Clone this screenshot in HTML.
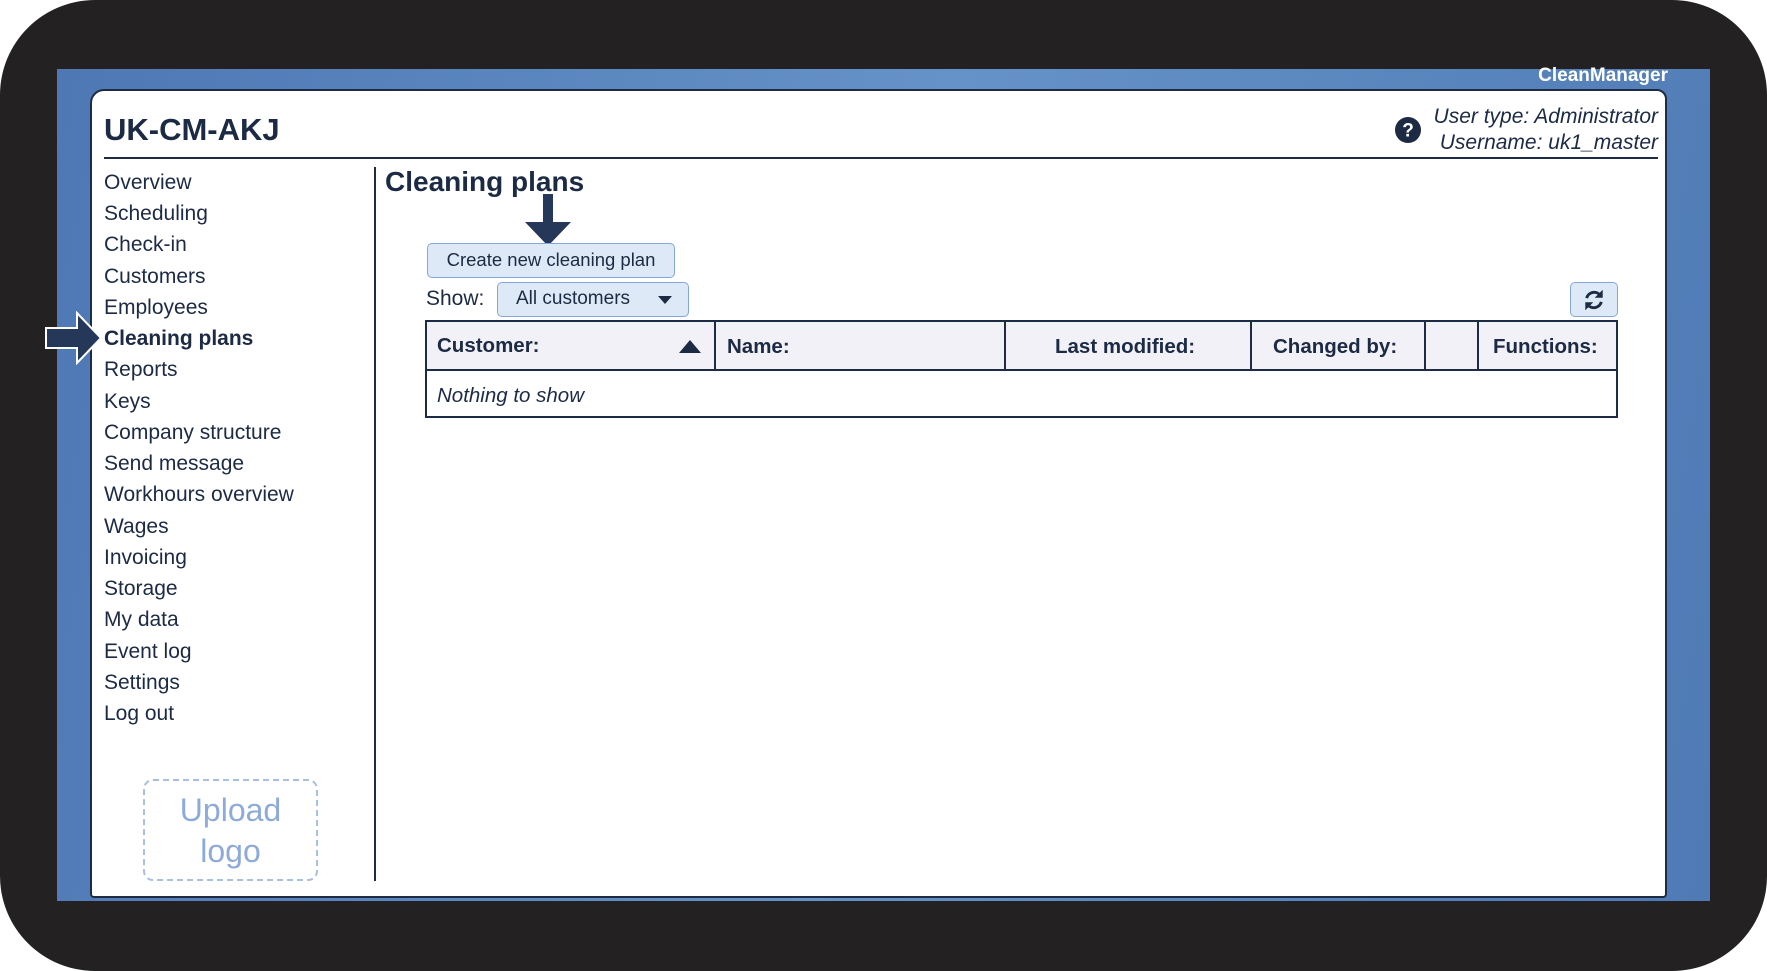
<!DOCTYPE html>
<html><head><meta charset="utf-8"><style>
*{margin:0;padding:0;box-sizing:border-box}
body{width:1767px;height:971px;background:#fff;font-family:"Liberation Sans",sans-serif;color:#1c2a44;position:relative;overflow:hidden}
.frame{position:absolute;left:0;top:0;width:1767px;height:971px;background:#232122;border-radius:95px}
.blue{position:absolute;left:57px;top:69px;width:1653px;height:832px;background:linear-gradient(100deg,#4e78b4 0%,#6592c8 50%,#4f7ab5 100%)}
.panel{position:absolute;left:90px;top:89px;width:1577px;height:809px;background:#fff;border:2px solid #1e2b45;border-radius:14px 10px 4px 4px}
.abs{position:absolute;white-space:nowrap}
.nav div{position:absolute;left:104px;font-size:21px;line-height:24px}
.btn{position:absolute;background:#dde9f7;border:1.5px solid #86a7d6;border-radius:5px}
</style></head><body>
<div class="frame"></div>
<div class="blue"></div>
<div class="abs" style="right:99px;top:65px;color:#fff;font-weight:bold;font-size:19px">CleanManager</div>
<div class="panel"></div>
<div class="abs" style="left:104px;top:112px;font-size:31px;font-weight:bold">UK-CM-AKJ</div>
<div class="abs" style="left:104px;top:157px;width:1554px;height:2px;background:#1e2b45"></div>
<div class="abs" style="right:109px;top:104px;font-size:21px;font-style:italic;text-align:right;line-height:26px">User type: Administrator<br>Username: uk1_master</div>
<svg class="abs" style="left:1395px;top:117px" width="26" height="26" viewBox="0 0 26 26"><circle cx="13" cy="13" r="13" fill="#1c2a44"/><text x="13" y="19.5" text-anchor="middle" font-family="Liberation Sans" font-weight="bold" font-size="19" fill="#fff">?</text></svg>
<div class="nav">
<div style="top:171px">Overview</div>
<div style="top:202px">Scheduling</div>
<div style="top:233px">Check-in</div>
<div style="top:265px">Customers</div>
<div style="top:296px">Employees</div>
<div style="top:327px;font-weight:bold">Cleaning plans</div>
<div style="top:358px">Reports</div>
<div style="top:390px">Keys</div>
<div style="top:421px">Company structure</div>
<div style="top:452px">Send message</div>
<div style="top:483px">Workhours overview</div>
<div style="top:515px">Wages</div>
<div style="top:546px">Invoicing</div>
<div style="top:577px">Storage</div>
<div style="top:608px">My data</div>
<div style="top:640px">Event log</div>
<div style="top:671px">Settings</div>
<div style="top:702px">Log out</div>
</div>
<svg class="abs" style="left:44px;top:311px" width="60" height="54" viewBox="0 0 60 54"><path d="M2 17H33V2L57 27L33 52V37H2Z" fill="#25385a" stroke="#fff" stroke-width="2"/></svg>
<div class="abs" style="left:143px;top:779px;width:175px;height:102px;border:2px dashed #a9bfe0;border-radius:10px;color:#8eaad8;font-size:32px;text-align:center;line-height:41px;padding-top:9px">Upload<br>logo</div>
<div class="abs" style="left:374px;top:167px;width:2px;height:714px;background:#1e2b45"></div>
<div class="abs" style="left:385px;top:166px;font-size:28px;font-weight:bold">Cleaning plans</div>
<svg class="abs" style="left:523px;top:194px" width="50" height="54" viewBox="0 0 50 54"><path d="M20 0H30V28H48L25 52L2 28H20Z" fill="#25385a"/></svg>
<div class="btn" style="left:427px;top:243px;width:248px;height:35px;font-size:18.5px;text-align:center;line-height:32px">Create new cleaning plan</div>
<div class="abs" style="left:426px;top:287px;font-size:21px">Show:</div>
<div class="btn" style="left:497px;top:282px;width:192px;height:35px;font-size:19px;line-height:32px;padding-left:18px">All customers<svg style="position:absolute;right:16px;top:13px" width="14" height="8"><path d="M0 0H14L7 8Z" fill="#1c2a44"/></svg></div>
<div class="btn" style="left:1570px;top:282px;width:48px;height:35px">
<svg style="position:absolute;left:12px;top:6px" width="22" height="22" viewBox="0 0 24 24" fill="none" stroke="#1c2a44" stroke-width="3.2"><path d="M4 10A8.5 8.5 0 0 1 19 7"/><path d="M20 14A8.5 8.5 0 0 1 5 17"/><path d="M21 2V9H14Z" fill="#1c2a44" stroke-width="1"/><path d="M3 22V15H10Z" fill="#1c2a44" stroke-width="1"/></svg></div>
<div class="abs" style="left:425px;top:320px;width:1193px;height:98px;border:2px solid #1e2b45">
<div style="position:absolute;left:0;top:0;width:100%;height:49px;background:#f1f1f7;border-bottom:2px solid #1e2b45"></div>
<div style="position:absolute;left:287px;top:0;width:2px;height:49px;background:#1e2b45"></div>
<div style="position:absolute;left:577px;top:0;width:2px;height:49px;background:#1e2b45"></div>
<div style="position:absolute;left:823px;top:0;width:2px;height:49px;background:#1e2b45"></div>
<div style="position:absolute;left:997px;top:0;width:2px;height:49px;background:#1e2b45"></div>
<div style="position:absolute;left:1050px;top:0;width:2px;height:49px;background:#1e2b45"></div>
<div class="abs" style="left:10px;top:12px;font-size:20.5px;font-weight:bold">Customer:</div>
<svg class="abs" style="left:252px;top:18px" width="22" height="13"><path d="M0 13H22L11 0Z" fill="#1c2a44"/></svg>
<div class="abs" style="left:300px;top:13px;font-size:20.5px;font-weight:bold">Name:</div>
<div class="abs" style="left:628px;top:13px;font-size:20.5px;font-weight:bold">Last modified:</div>
<div class="abs" style="left:846px;top:13px;font-size:20.5px;font-weight:bold">Changed by:</div>
<div class="abs" style="left:1066px;top:13px;font-size:20.5px;font-weight:bold">Functions:</div>
<div class="abs" style="left:10px;top:62px;font-size:20.5px;font-style:italic">Nothing to show</div>
</div>
</body></html>
